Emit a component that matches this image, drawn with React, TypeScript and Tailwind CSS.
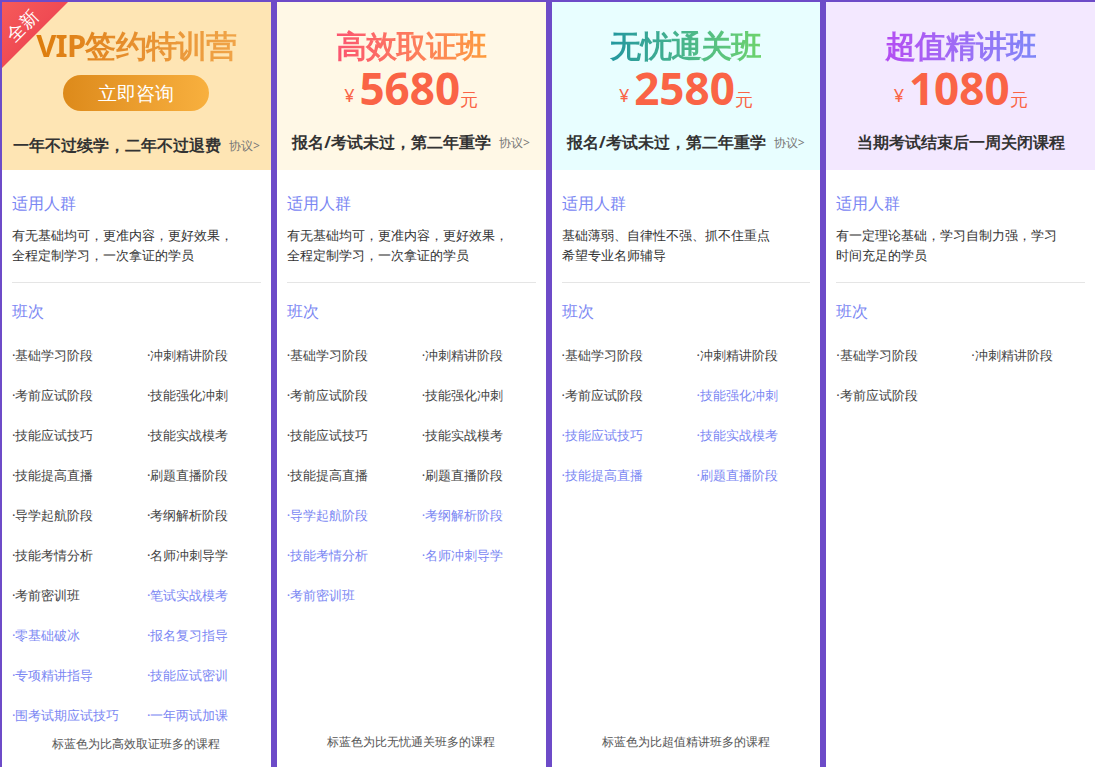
import React from 'react';

type Plan = {
  title: string;
  titleClass: string;
  headBg: string;
  price?: string;
  sub: string;
  agree: boolean;
  who: string[];
  items: [string, boolean][];
  note?: string;
  vip?: boolean;
};

const plans: Plan[] = [
  {
    title: 'VIP签约特训营',
    titleClass: 'bg-gradient-to-r from-[#dd7c08] to-[#f0a448]',
    headBg: 'bg-[#fee5b4]',
    sub: '一年不过续学，二年不过退费',
    agree: true,
    vip: true,
    who: ['有无基础均可，更准内容，更好效果，', '全程定制学习，一次拿证的学员'],
    items: [
      ['基础学习阶段', false], ['冲刺精讲阶段', false],
      ['考前应试阶段', false], ['技能强化冲刺', false],
      ['技能应试技巧', false], ['技能实战模考', false],
      ['技能提高直播', false], ['刷题直播阶段', false],
      ['导学起航阶段', false], ['考纲解析阶段', false],
      ['技能考情分析', false], ['名师冲刺导学', false],
      ['考前密训班', false], ['笔试实战模考', true],
      ['零基础破冰', true], ['报名复习指导', true],
      ['专项精讲指导', true], ['技能应试密训', true],
      ['围考试期应试技巧', true], ['一年两试加课', true],
    ],
    note: '标蓝色为比高效取证班多的课程',
  },
  {
    title: '高效取证班',
    titleClass: 'bg-gradient-to-r from-[#fb5470] to-[#fd9c3c]',
    headBg: 'bg-[#fff8e6]',
    price: '5680',
    sub: '报名/考试未过，第二年重学',
    agree: true,
    who: ['有无基础均可，更准内容，更好效果，', '全程定制学习，一次拿证的学员'],
    items: [
      ['基础学习阶段', false], ['冲刺精讲阶段', false],
      ['考前应试阶段', false], ['技能强化冲刺', false],
      ['技能应试技巧', false], ['技能实战模考', false],
      ['技能提高直播', false], ['刷题直播阶段', false],
      ['导学起航阶段', true], ['考纲解析阶段', true],
      ['技能考情分析', true], ['名师冲刺导学', true],
      ['考前密训班', true],
    ],
    note: '标蓝色为比无忧通关班多的课程',
  },
  {
    title: '无忧通关班',
    titleClass: 'bg-gradient-to-r from-[#22979f] to-[#6dd36c]',
    headBg: 'bg-[#e8feff]',
    price: '2580',
    sub: '报名/考试未过，第二年重学',
    agree: true,
    who: ['基础薄弱、自律性不强、抓不住重点', '希望专业名师辅导'],
    items: [
      ['基础学习阶段', false], ['冲刺精讲阶段', false],
      ['考前应试阶段', false], ['技能强化冲刺', true],
      ['技能应试技巧', true], ['技能实战模考', true],
      ['技能提高直播', true], ['刷题直播阶段', true],
    ],
    note: '标蓝色为比超值精讲班多的课程',
  },
  {
    title: '超值精讲班',
    titleClass: 'bg-gradient-to-r from-[#b44cf2] to-[#7e86f8]',
    headBg: 'bg-[#f3e8ff]',
    price: '1080',
    sub: '当期考试结束后一周关闭课程',
    agree: false,
    who: ['有一定理论基础，学习自制力强，学习', '时间充足的学员'],
    items: [
      ['基础学习阶段', false], ['冲刺精讲阶段', false],
      ['考前应试阶段', false],
    ],
  },
];

function Column({ p }: { p: Plan }) {
  return (
    <div className="flex-1 flex flex-col bg-white relative overflow-hidden">
      <div className={`${p.headBg} h-[168px] shrink-0 flex flex-col items-center relative`}>
        {p.vip && (
          <div className="absolute left-0 top-0 w-[66px] h-[66px] bg-gradient-to-br from-[#f65a5a] to-[#e8384c] [clip-path:polygon(0_0,100%_0,0_100%)]">
            <span className="absolute left-[2px] top-[14px] -rotate-45 text-white text-[18px] leading-none">全新</span>
          </div>
        )}
        <div className={`${p.titleClass} bg-clip-text text-transparent font-bold text-[31px] leading-[34px] mt-[26px] tracking-tight`}>
          {p.title}
        </div>
        {p.vip ? (
          <div className="mt-[13px] w-[146px] h-[36px] rounded-full bg-gradient-to-r from-[#dd8a1a] to-[#f8b03e] text-white text-[19px] flex items-center justify-center">
            立即咨询
          </div>
        ) : (
          <div className="flex items-end text-[#fa6446] mt-[2px] h-[46px]">
            <span className="text-[18px] leading-none mb-[6px] mr-[5px]">¥</span>
            <span className="text-[44px] font-bold leading-none">{p.price}</span>
            <span className="text-[18px] leading-none mb-[2px]">元</span>
          </div>
        )}
        <div className={`flex items-end ${p.vip ? 'mt-[22px]' : 'mt-[20px]'}`}>
          <span className="text-[16px] font-bold text-[#333]">{p.sub}</span>
          {p.agree && <span className="text-[12px] text-[#777] ml-[8px] mb-[2px]">协议&gt;</span>}
        </div>
      </div>
      <div className="px-[10px] flex-1 flex flex-col">
        <div className="text-[16px] text-[#7b87f3] mt-[25px] leading-none">适用人群</div>
        <div className="text-[13px] text-[#333] mt-[14px] leading-[20px]">
          {p.who.map((w) => (
            <div key={w}>{w}</div>
          ))}
        </div>
        <div className="h-px bg-[#e5e5e5] mt-[17px]" />
        <div className="text-[16px] text-[#7b87f3] mt-[20px] leading-none">班次</div>
        <div className="grid grid-cols-[135px_1fr] mt-[16px] text-[13px] leading-[40px]">
          {p.items.map(([t, blue]) => (
            <div key={t} className={blue ? 'text-[#7b87f3]' : 'text-[#444]'}>·{t}</div>
          ))}
        </div>
        {p.note && (
          <div className="mt-auto mb-[16px] text-center text-[12px] text-[#555]">{p.note}</div>
        )}
      </div>
    </div>
  );
}

export default function App() {
  return (
    <div className="w-[1095px] h-[767px] bg-[#6d4bc8] pl-[2px] pt-[2px] flex gap-[6px] overflow-hidden [font-family:'Noto_Sans_CJK_SC','Noto_Sans',sans-serif]">
      {plans.map((p) => (
        <Column key={p.title} p={p} />
      ))}
    </div>
  );
}
